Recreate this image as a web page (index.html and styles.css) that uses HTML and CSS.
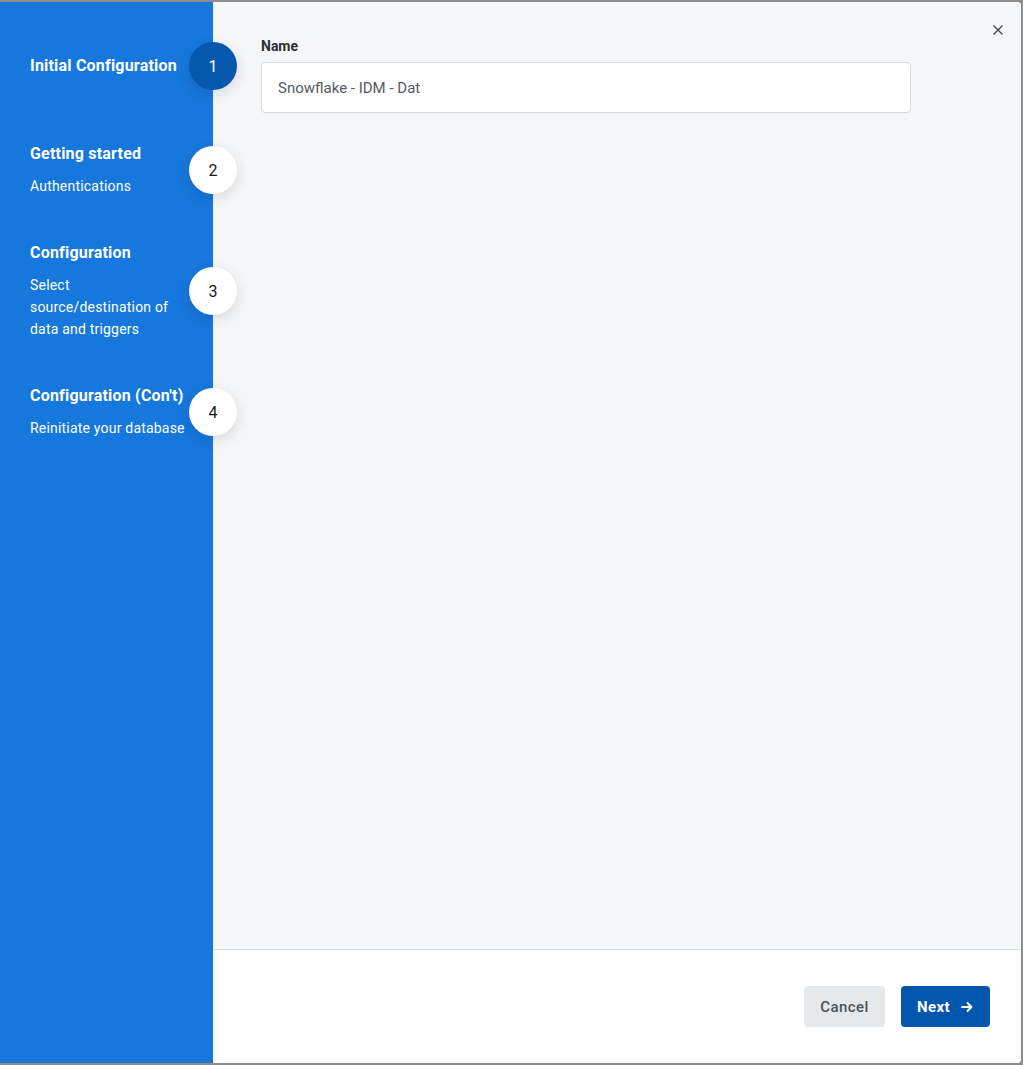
FILE: index.html
```html
<!DOCTYPE html>
<html>
<head>
<meta charset="utf-8">
<link rel="stylesheet" href="styles.css">
</head>
<body>
<div class="modal">
  <aside class="sidebar">
    <div class="step step-first">
      <div class="step-text">
        <div class="step-title">Initial Configuration</div>
      </div>
      <div class="circle active">1</div>
    </div>
    <div class="step">
      <div class="step-text">
        <div class="step-title">Getting started</div>
        <div class="step-desc">Authentications</div>
      </div>
      <div class="circle">2</div>
    </div>
    <div class="step">
      <div class="step-text">
        <div class="step-title">Configuration</div>
        <div class="step-desc">Select source/destination of data and triggers</div>
      </div>
      <div class="circle">3</div>
    </div>
    <div class="step">
      <div class="step-text">
        <div class="step-title">Configuration (Con't)</div>
        <div class="step-desc">Reinitiate your database</div>
      </div>
      <div class="circle">4</div>
    </div>
  </aside>
  <main class="main">
    <div class="content">
      <button class="close" aria-label="Close">
        <svg width="12" height="12" viewBox="0 0 12 12"><path d="M1.5 1.5 L10.5 10.5 M10.5 1.5 L1.5 10.5" stroke="#3c434a" stroke-width="1.3" fill="none"/></svg>
      </button>
      <label class="field-label">Name</label>
      <div class="input">Snowflake - IDM - Dat</div>
    </div>
    <footer class="footer">
      <button class="btn btn-cancel">Cancel</button>
      <button class="btn btn-next">Next
        <svg width="12" height="12" viewBox="0 0 12 12"><path d="M1 6 H10.5 M6.5 2 L10.5 6 L6.5 10" stroke="#fff" stroke-width="1.8" fill="none" stroke-linecap="round" stroke-linejoin="round"/></svg>
      </button>
    </footer>
  </main>
</div>
</body>
</html>
```
FILE: styles.css
```css
html, body {
  margin: 0;
  padding: 0;
}
body {
  background: #8d8d8d;
  font-family: Roboto, "Noto Sans", Arial, sans-serif;
  width: 1023px;
  height: 1065px;
  overflow: hidden;
}
.modal {
  margin: 2px 2px 0 0;
  height: 1061px;
  display: flex;
  border-radius: 0 4px 4px 0;
  background: #fff;
}
.sidebar {
  width: 213px;
  flex: none;
  background: #1677dc;
  padding: 40px 0 0 30px;
  box-sizing: border-box;
  position: relative;
  z-index: 2;
  display: flex;
  flex-direction: column;
  gap: 45px;
}
.step {
  display: flex;
  align-items: center;
  margin-right: -24px;
}
.step-first {
  margin-bottom: 8px;
}
.step-text {
  flex: 1;
  color: #fff;
  min-width: 0;
}
.step-title {
  font-size: 16px;
  font-weight: 700;
  line-height: 22px;
  letter-spacing: 0.2px;
  white-space: nowrap;
}
.step-desc {
  font-size: 14px;
  line-height: 22px;
  margin-top: 10px;
  letter-spacing: 0.2px;
  padding-right: 2px;
}
.circle {
  width: 48px;
  height: 48px;
  flex: none;
  border-radius: 50%;
  background: #fff;
  color: #1a1a1a;
  font-size: 16px;
  display: flex;
  align-items: center;
  justify-content: center;
  box-shadow: 0 4px 14px rgba(0, 0, 0, 0.12);
}
.circle.active {
  background: #0558ae;
  color: #fff;
}
.main {
  flex: 1;
  display: flex;
  flex-direction: column;
  border-radius: 0 4px 4px 0;
  overflow: hidden;
}
.content {
  flex: 1;
  background: #f5f6f8;
  padding: 35px 0 0 48px;
  position: relative;
}
.close {
  position: absolute;
  top: 21px;
  right: 16px;
  width: 14px;
  height: 14px;
  padding: 0;
  border: 0;
  background: transparent;
  display: flex;
  align-items: center;
  justify-content: center;
}
.field-label {
  display: block;
  font-size: 14px;
  font-weight: 700;
  color: #2b2f33;
  line-height: 18px;
}
.input {
  margin-top: 7px;
  width: 650px;
  height: 51px;
  box-sizing: border-box;
  border: 1px solid #d6d9dd;
  border-radius: 4px;
  background: #fff;
  padding: 0 16px;
  display: flex;
  align-items: center;
  font-size: 15px;
  color: #555a5f;
}
.footer {
  height: 113px;
  flex: none;
  border-top: 1px solid #d9dcdf;
  background: #fff;
  display: flex;
  align-items: center;
  justify-content: flex-end;
  gap: 16px;
  padding-right: 31px;
}
.btn {
  height: 41px;
  border: 0;
  border-radius: 4px;
  font-family: Roboto, "Noto Sans", Arial, sans-serif;
  font-size: 15px;
  font-weight: 500;
  padding: 0 16px;
  display: flex;
  align-items: center;
  letter-spacing: 0.4px;
}
.btn-cancel {
  width: 81px;
  justify-content: center;
  background: #e6e9ec;
  color: #4b545c;
}
.btn-next {
  width: 89px;
  background: #0356ae;
  color: #fff;
  font-weight: 700;
  gap: 11px;
}
```
